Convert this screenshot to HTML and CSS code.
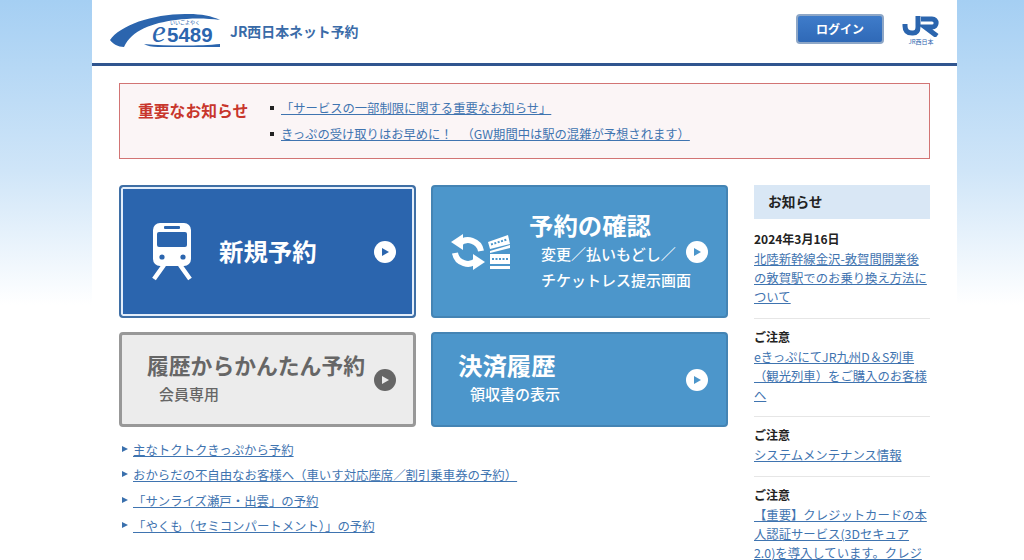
FILE: index.html
```html
<!DOCTYPE html>
<html lang="ja">
<head>
    <meta charset="UTF-8">
    <title>JR西日本ネット予約 e5489</title>
    <link rel="stylesheet" href="styles.css">
</head>
<body>
<div class="page">

    <!-- Header -->
    <header class="page-header">
        <svg class="logo" viewBox="0 0 112 38" width="112" height="38">
            <path fill="#2b65ae" d="M0 27C10 12 45 0 79 1 91 1 102 3 110 7 96 5 80 5 66 7 42 10 22 17 14 34 8 34 3 31 0 27Z"/>
            <path fill="#2b65ae" d="M34 31C58 33 90 33 110 31V34H48C42 34 37 33 34 31Z"/>
            <text class="logo-e" x="42" y="29">e</text>
            <text class="logo-num" x="57" y="29">5489</text>
            <text class="logo-ruby" x="60" y="11">いいごよやく</text>
        </svg>
        <span class="site-name">JR西日本ネット予約</span>
        <a class="login-btn" href="#">ログイン</a>
        <div class="jr-mark">
            <svg viewBox="0 0 38 21" width="38" height="21">
                <path fill="none" stroke="#2b65ae" stroke-width="5" d="M3 8V10C3 15 6 17 10 17H11C14 17 16 15 16 11V0"/>
                <path fill="none" stroke="#2b65ae" stroke-width="5" d="M19 3H30C35.500 3 35.500 11 30 11H23L35 20"/>
            </svg>
            <span class="jr-text">JR西日本</span>
        </div>
    </header>

    <div class="content">
        <!-- Important notice -->
        <section class="notice">
            <h2 class="notice-title">重要なお知らせ</h2>
            <ul class="notice-list">
                <li><a href="#">「サービスの一部制限に関する重要なお知らせ」</a></li>
                <li><a href="#">きっぷの受け取りはお早めに！&ensp; （GW期間中は駅の混雑が予想されます）</a></li>
            </ul>
        </section>

        <div class="columns">
            <main class="main-col">
                <div class="btn-grid">
                    <a class="menu-btn btn-new" href="#">
                        <svg class="train-icon" viewBox="0 0 42 58" width="42" height="58">
                            <rect x="2" y="0" width="38" height="43" rx="7" fill="#fff"/>
                            <rect x="6" y="9" width="30" height="15" rx="2" fill="#2b65ae"/>
                            <rect x="13" y="3" width="16" height="3" rx="1" fill="#2b65ae"/>
                            <circle cx="11" cy="34" r="2.600" fill="#2b65ae"/>
                            <circle cx="32" cy="34" r="2.600" fill="#2b65ae"/>
                            <path fill="none" stroke="#fff" stroke-width="4.500" d="M13 42 3 56M29 42 39 56"/>
                        </svg>
                        <span class="btn-title">新規予約</span>
                        <svg class="arrow" viewBox="0 0 22 22" width="22" height="22">
                            <circle cx="11" cy="11" r="11" fill="#fff"/>
                            <path d="M8 7 15 11 8 15Z" fill="#2b65ae"/>
                        </svg>
                    </a>

                    <a class="menu-btn btn-light btn-confirm" href="#">
                        <svg class="change-icon" viewBox="0 0 62 36" width="62" height="36">
                            <path fill="none" stroke="#fff" stroke-width="6" d="M9 10A13 13 0 0 1 31 17"/>
                            <path fill="none" stroke="#fff" stroke-width="6" d="M5 19A13 13 0 0 0 27 26"/>
                            <path fill="#fff" d="M13 0 1 8 13 16ZM23 20 35 28 23 36Z"/>
                            <path fill="#fff" d="M38 8 58 1 60 10 40 15ZM40 17 60 11V14L40 19ZM40 20H60V30H40ZM40 32H60V35H40Z"/>
                            <path fill="none" stroke="#4c96cb" stroke-width="2" stroke-dasharray="2 1.500" d="M41 10.500 57 5.500M42 25H58"/>
                        </svg>
                        <span class="btn-text">
                            <span class="btn-title">予約の確認</span>
                            <span class="btn-sub">変更／払いもどし／<br>チケットレス提示画面</span>
                        </span>
                        <svg class="arrow" viewBox="0 0 22 22" width="22" height="22">
                            <circle cx="11" cy="11" r="11" fill="#fff"/>
                            <path d="M8 7 15 11 8 15Z" fill="#4c96cb"/>
                        </svg>
                    </a>

                    <a class="menu-btn btn-gray" href="#">
                        <span class="btn-text">
                            <span class="btn-title">履歴からかんたん予約</span>
                            <span class="btn-sub">会員専用</span>
                        </span>
                        <svg class="arrow" viewBox="0 0 22 22" width="22" height="22">
                            <circle cx="11" cy="11" r="11" fill="#666"/>
                            <path d="M8 7 15 11 8 15Z" fill="#ececec"/>
                        </svg>
                    </a>

                    <a class="menu-btn btn-light btn-payment" href="#">
                        <span class="btn-text">
                            <span class="btn-title">決済履歴</span>
                            <span class="btn-sub">領収書の表示</span>
                        </span>
                        <svg class="arrow" viewBox="0 0 22 22" width="22" height="22">
                            <circle cx="11" cy="11" r="11" fill="#fff"/>
                            <path d="M8 7 15 11 8 15Z" fill="#4c96cb"/>
                        </svg>
                    </a>
                </div>

                <ul class="link-list">
                    <li><a href="#">主なトクトクきっぷから予約</a></li>
                    <li><a href="#">おからだの不自由なお客様へ（車いす対応座席／割引乗車券の予約）</a></li>
                    <li><a href="#">「サンライズ瀬戸・出雲」の予約</a></li>
                    <li><a href="#">「やくも（セミコンパートメント）」の予約</a></li>
                </ul>
            </main>

            <!-- Side news -->
            <aside class="side-col">
                <h3 class="side-title">お知らせ</h3>
                <div class="news-item">
                    <p class="news-date">2024年3月16日</p>
                    <a href="#">北陸新幹線金沢-敦賀間開業後の敦賀駅でのお乗り換え方法について</a>
                </div>
                <div class="news-item">
                    <p class="news-date">ご注意</p>
                    <a href="#">eきっぷにてJR九州D＆S列車（観光列車）をご購入のお客様へ</a>
                </div>
                <div class="news-item">
                    <p class="news-date">ご注意</p>
                    <a href="#">システムメンテナンス情報</a>
                </div>
                <div class="news-item">
                    <p class="news-date">ご注意</p>
                    <a href="#">【重要】クレジットカードの本人認証サービス(3Dセキュア2.0)を導入しています。クレジットカードをご利用の方はご確認ください。</a>
                </div>
            </aside>
        </div>
    </div>
</div>
</body>
</html>
```
FILE: styles.css
```css
html, body {
    height: 100%;
    overflow: hidden;
}

body {
    margin: 0;
    font-family: "Noto Sans CJK JP", "Noto Sans", sans-serif;
    color: #222;
    background: linear-gradient(to bottom, #a5cff3 0, #cfe5f8 170px, #ffffff 305px) no-repeat;
    background-color: #fff;
}

a {
    color: #3f74b0;
}

ul {
    list-style: none;
    margin: 0;
    padding: 0;
}

.page {
    width: 865px;
    margin-left: 92px;
    height: 100%;
    overflow: hidden;
    background: #fff;
}

/* Page Header */
.page-header {
    height: 63px;
    border-bottom: 3px solid #30558f;
    display: flex;
    align-items: center;
    padding-left: 18px;
    padding-right: 17px;
}

.logo-e {
    font-family: "Liberation Serif", serif;
    font-style: italic;
    font-size: 31px;
    fill: #2b65ae;
}

.logo-num {
    font-family: "Liberation Sans", sans-serif;
    font-weight: bold;
    font-size: 20.5px;
    fill: #2b65ae;
}

.logo-ruby {
    font-size: 5px;
    fill: #2b65ae;
}

.site-name {
    margin-left: 8px;
    margin-top: -2px;
    font-size: 13.9px;
    font-weight: bold;
    color: #3a6ba8;
}

.login-btn {
    margin-left: auto;
    width: 84px;
    height: 26px;
    line-height: 26px;
    margin-top: -5px;
    text-align: center;
    font-size: 12px;
    font-weight: bold;
    color: #fff;
    text-decoration: none;
    border: 2px solid #8ea7c7;
    border-radius: 4px;
    background: linear-gradient(to bottom, #3f7cca, #2f69b7);
}

.jr-mark {
    width: 38px;
    margin-left: 18px;
    margin-top: -1px;
    display: flex;
    flex-direction: column;
    align-items: center;
}

.jr-text {
    font-size: 6px;
    line-height: 9px;
    color: #2b65ae;
    white-space: nowrap;
}

.content {
    padding: 17px 27px 0;
}

/* Important notice */
.notice {
    height: 76px;
    box-sizing: border-box;
    border: 1px solid #d27474;
    background: #fbf5f6;
    display: flex;
    align-items: center;
    padding-left: 18px;
}

.notice-title {
    margin: 0;
    width: 132px;
    font-size: 15.8px;
    font-weight: bold;
    color: #c8362c;
    position: relative;
    top: -11px;
}

.notice-list li {
    font-size: 12.3px;
    line-height: 26px;
    padding-left: 11px;
    position: relative;
}

.notice-list li::before {
    content: "";
    position: absolute;
    left: 0;
    top: 11px;
    width: 4px;
    height: 4px;
    background: #222;
}

.columns {
    display: flex;
    margin-top: 26px;
}

.main-col {
    width: 609px;
}

.btn-grid {
    display: grid;
    grid-template-columns: 297px 297px;
    grid-template-rows: 133px 95px;
    gap: 14px 15px;
}

.menu-btn {
    position: relative;
    box-sizing: border-box;
    display: flex;
    align-items: center;
    border-radius: 4px;
    text-decoration: none;
    color: #fff;
}

.btn-text {
    display: flex;
    flex-direction: column;
}

.btn-title {
    font-size: 24.4px;
    font-weight: bold;
    line-height: 30px;
    white-space: nowrap;
    position: relative;
    top: -1px;
}

.btn-sub {
    font-size: 15px;
    font-weight: 500;
    line-height: 26px;
    margin-left: 12px;
    white-space: nowrap;
}

.arrow {
    position: absolute;
    right: 18px;
    top: 50%;
    margin-top: -11px;
}

.btn-new {
    background: #2b65ae;
    border: 2px solid #3f6fa5;
    box-shadow: inset 0 0 0 2px #e4eefa;
    padding-left: 30px;
}

.btn-new .btn-title {
    margin-left: 26px;
}

.train-icon {
    flex: none;
}

.btn-light {
    background: #4c96cb;
    border: 2px solid #4484b4;
}

.btn-confirm {
    padding-left: 17px;
}

.change-icon {
    margin-right: 17px;
    flex: none;
}

.btn-payment {
    padding-left: 25px;
}

.btn-gray {
    background: #ececec;
    border: 3px solid #989898;
    color: #666;
    padding-left: 25px;
}

.btn-gray .arrow {
    right: 17px;
}

.btn-gray .btn-title {
    font-size: 21.8px;
}

.btn-gray .btn-title,
.btn-payment .btn-title {
    line-height: 28px;
}

.btn-gray .btn-sub,
.btn-payment .btn-sub {
    line-height: 28px;
}

.link-list {
    margin-top: 11px;
}

.link-list li {
    font-size: 12.4px;
    line-height: 25.4px;
    padding-left: 14px;
    position: relative;
}

.link-list li::before {
    content: "";
    position: absolute;
    left: 3px;
    top: 8px;
    border-left: 6px solid #3a70ad;
    border-top: 3.5px solid transparent;
    border-bottom: 3.5px solid transparent;
}

/* Side news */
.side-col {
    width: 177px;
    margin-left: 26px;
}

.side-title {
    margin: 0 0 2px;
    height: 34px;
    line-height: 32px;
    padding-left: 14px;
    font-size: 13.7px;
    font-weight: bold;
    background: #d9e7f5;
}

.news-item {
    font-size: 12.35px;
    line-height: 19px;
    padding: 8px 0 11px;
    border-bottom: 1px solid #e6e6e6;
}

.news-date {
    margin: 0 0 1px;
    font-size: 12px;
    font-weight: bold;
    line-height: 20px;
}
```
